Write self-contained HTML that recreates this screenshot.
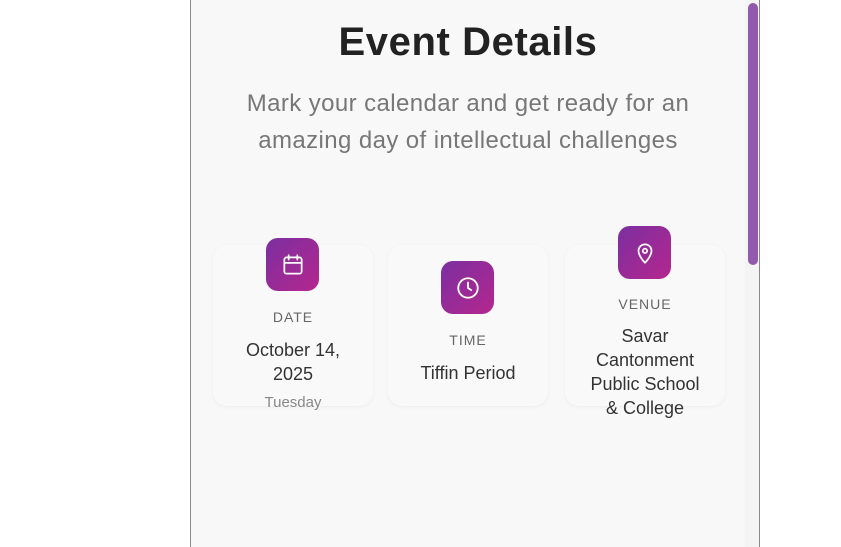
<!DOCTYPE html>
<html><head><meta charset="utf-8"><style>
*{margin:0;padding:0;box-sizing:border-box}
body{width:841px;height:547px;background:#fff;position:relative;overflow:hidden;font-family:"Liberation Sans",sans-serif}
.panel{position:absolute;left:190px;top:0;width:570px;height:547px;background:#f8f8f8;border-left:1px solid #8a8a8a;border-right:1px solid #8a8a8a}
.track{position:absolute;left:745px;top:0;width:14px;height:547px;background:#f4f4f4}
.thumb{position:absolute;left:748px;top:3px;width:10px;height:262px;border-radius:5px;background:#9359ad}
.t{position:absolute;text-align:center;white-space:nowrap}
h1{position:absolute;left:191px;width:554px;top:20px;text-align:center;font-size:40px;letter-spacing:0.6px;font-weight:bold;color:#222}
.sub{left:191px;width:554px;top:85px;font-size:24px;letter-spacing:0.4px;line-height:37px;color:#777}
.card{position:absolute;top:245px;width:160px;height:161px;background:#f9f9f9;border-radius:14px;box-shadow:0 1px 4px rgba(0,0,0,0.05)}
.ic{position:absolute;width:53px;height:53px;border-radius:12px;background:linear-gradient(135deg,#7b2fa0,#b5268e);display:flex;align-items:center;justify-content:center}
.lab{font-size:14px;color:#666;letter-spacing:1px}
.val{font-size:18px;color:#333;line-height:24px}
</style></head><body>
<div class="panel"></div>
<div class="track"></div><div class="thumb"></div>
<h1>Event Details</h1>
<div class="t sub">Mark your calendar and get ready for an<br>amazing day of intellectual challenges</div>
<div class="card" style="left:213px"></div>
<div class="card" style="left:388px"></div>
<div class="card" style="left:565px"></div>
<div class="ic" style="left:266px;top:238px"><svg width="26" height="26" viewBox="0 0 24 24" fill="none" stroke="#fff" stroke-width="1.6" stroke-linecap="round"><rect x="4" y="5" width="16" height="15" rx="2"/><path d="M4 10h16M8 3v4M16 3v4"/></svg></div>
<div class="ic" style="left:441px;top:261px"><svg width="26" height="26" viewBox="0 0 24 24" fill="none" stroke="#fff" stroke-width="1.7" stroke-linecap="round"><circle cx="12" cy="12" r="9"/><path d="M12 7v5l3 2"/></svg></div>
<div class="ic" style="left:618px;top:226px"><svg width="26" height="26" viewBox="0 0 24 24" fill="none" stroke="#fff" stroke-width="1.6" stroke-linejoin="round"><path d="M12 21s-6-6-6-11a6 6 0 0 1 12 0c0 5-6 11-6 11z"/><circle cx="12" cy="10" r="2"/></svg></div>
<div class="t lab" style="left:213px;width:160px;top:309px">DATE</div>
<div class="t val" style="left:213px;width:160px;top:338px">October 14,<br>2025</div>
<div class="t" style="left:213px;width:160px;top:394px;font-size:15px;color:#888">Tuesday</div>
<div class="t lab" style="left:388px;width:160px;top:332px">TIME</div>
<div class="t val" style="left:388px;width:160px;top:361px">Tiffin Period</div>
<div class="t lab" style="left:565px;width:160px;top:296px">VENUE</div>
<div class="t val" style="left:565px;width:160px;top:324px;line-height:24px">Savar<br>Cantonment<br>Public School<br>&amp; College</div>
</body></html>
